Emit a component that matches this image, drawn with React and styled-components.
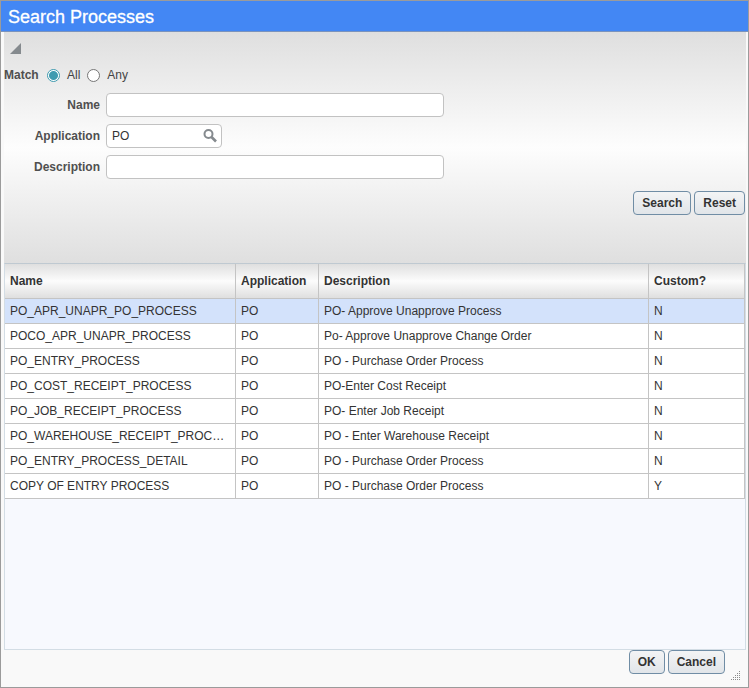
import React, { useState } from 'react'
import styled, { createGlobalStyle } from 'styled-components'

const GlobalStyle = createGlobalStyle`
  body {
    margin: 0;
    color: #333;
    font-family: 'Liberation Sans', Arial, Helvetica, sans-serif;
    font-size: 12px;
    line-height: 16px;
  }

  *, *::before, *::after {
    box-sizing: border-box;
  }

  button, input {
    font: inherit;
    color: inherit;
  }
`

const Dialog = styled.section`
  position: relative;
  display: flex;
  flex-direction: column;
  min-height: 100vh;
  border: 1px solid #9b9b9b;
  background: #f9f9f9;
`

const TitleBar = styled.header`
  padding: 5px 7px 2px;
  border-bottom: 1px solid #7a93bd;
  background: #4387f4;
`

const Title = styled.h1`
  margin: 0;
  color: #fff;
  font-size: 18px;
  font-weight: 400;
  line-height: 23px;
  -webkit-text-stroke: 0.3px #fff;
`

const Content = styled.div`
  flex: 1;
  display: flex;
  flex-direction: column;
  padding: 0 2px 0 3px;
`

const SearchForm = styled.form`
  display: flex;
  flex-direction: column;
  padding: 11px 1px 48px 0;
  background: linear-gradient(#dfdfdf, #fdfdfd 50%, #dfdfdf);
`

const Collapse = styled.button`
  display: flex;
  align-self: flex-start;
  margin-left: 6px;
  padding: 0;
  border: 0;
  background: none;
  cursor: pointer;
`

const MatchRow = styled.fieldset`
  display: flex;
  align-items: center;
  margin: 13px 0 10px;
  padding: 0;
  border: 0;
`

const MatchLabel = styled.span`
  width: 43px;
  color: #4f4f4f;
  font-weight: bold;
`

const Option = styled.label`
  display: flex;
  align-items: center;
  gap: 7px;
  margin-right: 7px;
  color: #444;
`

const Radio = styled.input`
  appearance: none;
  width: 13px;
  height: 13px;
  margin: 1px 0 0;
  border: 1px solid #767676;
  border-radius: 50%;
  background: #fff;

  &:checked {
    border-color: #3f9bb0;
    background: radial-gradient(#3f9bb0 0 4px, #fff 5px);
  }
`

const Fields = styled.div`
  display: grid;
  grid-template-columns: 96px minmax(0, 338px);
  gap: 7px 6px;
  align-items: center;
`

const FieldLabel = styled.label`
  color: #4f4f4f;
  font-weight: bold;
  text-align: right;
`

const TextBox = styled.input`
  width: 100%;
  height: 24px;
  padding: 0 5px;
  border: 1px solid #c2c2c2;
  border-radius: 4px;
  background: #fff;
`

const Lookup = styled.div`
  display: flex;
  width: 116px;
  height: 24px;
  border: 1px solid #c2c2c2;
  border-radius: 4px;
  background: #fff;
`

const LookupInput = styled.input`
  flex: 1;
  min-width: 0;
  padding: 0 5px;
  border: 0;
  background: none;
  outline: none;
`

const LookupButton = styled.button`
  display: flex;
  align-items: center;
  padding: 0 4px;
  border: 0;
  background: none;
  cursor: pointer;
`

const Actions = styled.div`
  display: flex;
  justify-content: flex-end;
  gap: 3px;
  margin-top: 12px;
`

const Button = styled.button`
  height: 24px;
  padding: 0 8px;
  border: 1px solid #708da5;
  border-radius: 4px;
  background: linear-gradient(#f3f4f5, #e1e5e9);
  font-weight: bold;
  cursor: pointer;

  &:active {
    background: #d9dfe5;
  }
`

const Results = styled.div`
  flex: 1;
  border: 1px solid #d3dde5;
  border-top-color: #bfc9d1;
  background: #f7f9fe;
`

const Table = styled.table`
  width: 100%;
  table-layout: fixed;
  border-collapse: separate;
  border-spacing: 0;
`

const Col = styled.col`
  width: ${(props) => props.$width || 'auto'};
`

const HeadCell = styled.th`
  height: 35px;
  padding: 0 5px;
  border: solid #c4c4c4;
  border-width: 0 1px 1px 0;
  background: linear-gradient(#dfdfdf, #fcfcfc 50%, #dfdfdf);
  text-align: left;
`

const Row = styled.tr`
  background: ${(props) => (props.$selected ? '#d3e2fb' : '#fff')};
  cursor: default;
`

const Cell = styled.td`
  height: 25px;
  padding: 0 5px;
  border: solid #c4c4c4;
  border-width: 0 1px 1px 0;
  overflow: hidden;
  text-overflow: ellipsis;
  white-space: nowrap;
`

const Footer = styled.footer`
  display: flex;
  justify-content: flex-end;
  gap: 3px;
  padding: 0 23px 13px 0;
`

// sits over the corner of the dialog
const Grip = styled.svg`
  position: absolute;
  right: 7px;
  bottom: 6px;
`

const processes = [
  ['PO_APR_UNAPR_PO_PROCESS', 'PO', 'PO- Approve Unapprove Process', 'N'],
  ['POCO_APR_UNAPR_PROCESS', 'PO', 'Po- Approve Unapprove Change Order', 'N'],
  ['PO_ENTRY_PROCESS', 'PO', 'PO - Purchase Order Process', 'N'],
  ['PO_COST_RECEIPT_PROCESS', 'PO', 'PO-Enter Cost Receipt', 'N'],
  ['PO_JOB_RECEIPT_PROCESS', 'PO', 'PO- Enter Job Receipt', 'N'],
  ['PO_WAREHOUSE_RECEIPT_PROCESS', 'PO', 'PO - Enter Warehouse Receipt', 'N'],
  ['PO_ENTRY_PROCESS_DETAIL', 'PO', 'PO - Purchase Order Process', 'N'],
  ['COPY OF ENTRY PROCESS', 'PO', 'PO - Purchase Order Process', 'Y'],
]

const emptyForm = { name: '', application: 'PO', description: '' }

const gripDots = []
for (let row = 0; row < 5; row++) {
  for (let col = 4 - row; col < 5; col++) {
    gripDots.push([col * 2, row * 2])
  }
}

export default function App() {
  const [match, setMatch] = useState('all')
  const [form, setForm] = useState(emptyForm)
  const [selected, setSelected] = useState(0)

  const onChange = (e) => {
    setForm({ ...form, [e.target.name]: e.target.value })
  }

  return <>
    <GlobalStyle />
    <Dialog>
      <TitleBar>
        <Title>Search Processes</Title>
      </TitleBar>
      <Content>
        <SearchForm onSubmit={(e) => { e.preventDefault() }}>
          <Collapse type="button" aria-label="Collapse search">
            <svg width="11" height="11" viewBox="0 0 11 11">
              <path d="M11 0V11H0Z" fill="#858a8e" />
            </svg>
          </Collapse>
          <MatchRow aria-label="Match">
            <MatchLabel>Match</MatchLabel>
            <Option>
              <Radio type="radio" name="match" checked={match === 'all'} onChange={() => { setMatch('all') }} />
              All
            </Option>
            <Option>
              <Radio type="radio" name="match" checked={match === 'any'} onChange={() => { setMatch('any') }} />
              Any
            </Option>
          </MatchRow>
          <Fields>
            <FieldLabel htmlFor="name">Name</FieldLabel>
            <TextBox id="name" name="name" value={form.name} onChange={onChange} />
            <FieldLabel htmlFor="application">Application</FieldLabel>
            <Lookup>
              <LookupInput id="application" name="application" value={form.application} onChange={onChange} />
              <LookupButton type="button" aria-label="Look up application">
                <svg width="14" height="14" viewBox="0 0 14 14" fill="none" stroke="#858a8e">
                  <circle cx="5.5" cy="5" r="4" strokeWidth="2" />
                  <path d="M8.5 8L13 12.5" strokeWidth="2.6" />
                </svg>
              </LookupButton>
            </Lookup>
            <FieldLabel htmlFor="description">Description</FieldLabel>
            <TextBox id="description" name="description" value={form.description} onChange={onChange} />
          </Fields>
          <Actions>
            <Button type="submit">Search</Button>
            <Button type="button" onClick={() => { setForm(emptyForm) }}>Reset</Button>
          </Actions>
        </SearchForm>
        <Results>
          <Table>
            <colgroup>
              <Col $width="231px" />
              <Col $width="83px" />
              <Col />
              <Col $width="96px" />
            </colgroup>
            <thead>
              <tr>
                <HeadCell>Name</HeadCell>
                <HeadCell>Application</HeadCell>
                <HeadCell>Description</HeadCell>
                <HeadCell>Custom?</HeadCell>
              </tr>
            </thead>
            <tbody>
              {processes.map((process, index) => (
                <Row key={process[0]} $selected={index === selected} onClick={() => { setSelected(index) }}>
                  {process.map((value, i) => <Cell key={i}>{value}</Cell>)}
                </Row>
              ))}
            </tbody>
          </Table>
        </Results>
      </Content>
      <Footer>
        <Button type="button">OK</Button>
        <Button type="button">Cancel</Button>
      </Footer>
      <Grip width="10" height="10" viewBox="0 0 10 10" fill="#8a8a8a" shapeRendering="crispEdges">
        {gripDots.map(([x, y]) => <rect key={`${x}-${y}`} x={x} y={y} width="1" height="1" />)}
      </Grip>
    </Dialog>
  </>
}
